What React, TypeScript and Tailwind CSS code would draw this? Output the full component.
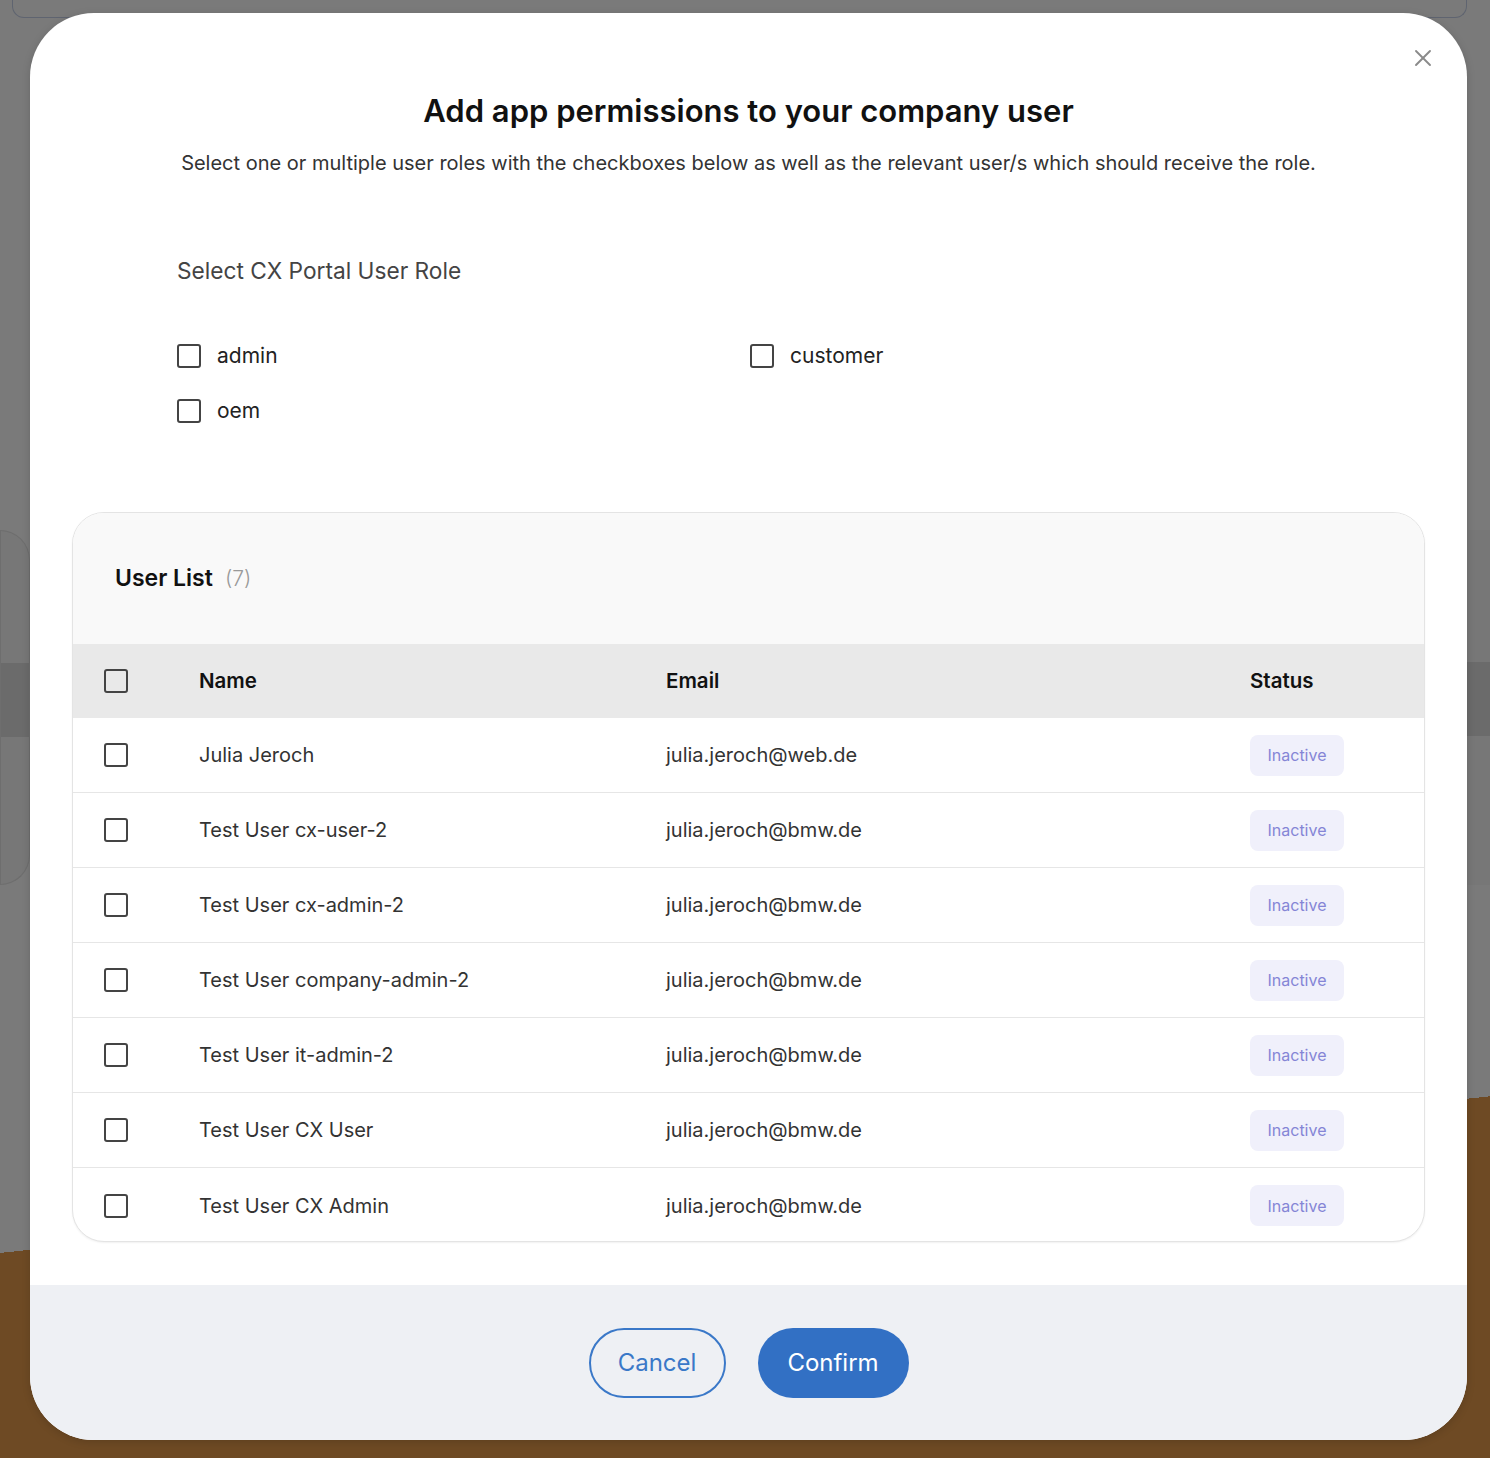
import { X } from 'lucide-react';

const roles = ['admin', 'customer', 'oem'];

const users = [
  { name: 'Julia Jeroch', email: 'julia.jeroch@web.de' },
  { name: 'Test User cx-user-2', email: 'julia.jeroch@bmw.de' },
  { name: 'Test User cx-admin-2', email: 'julia.jeroch@bmw.de' },
  { name: 'Test User company-admin-2', email: 'julia.jeroch@bmw.de' },
  { name: 'Test User it-admin-2', email: 'julia.jeroch@bmw.de' },
  { name: 'Test User CX User', email: 'julia.jeroch@bmw.de' },
  { name: 'Test User CX Admin', email: 'julia.jeroch@bmw.de' },
];

function Box() {
  return <span className="block w-6 h-6 rounded-[3px] border-2 border-[#444]" />;
}

export default function App() {
  return (
    <div
      className="relative w-full h-[1458px] overflow-hidden bg-[linear-gradient(174deg,#7a7a7a_77.6%,#6e4a24_77.6%)]"
      style={{ fontFamily: 'Inter, "Noto Sans", sans-serif' }}
    >
      {/* page behind the overlay */}
      <div className="ml-[12px] mr-[23px] h-[18px] rounded-b-[12px] border border-t-0 border-[#5f6470]" />
      <div className="mt-[512px] flex justify-between">
        <div className="w-[30px] h-[355px] rounded-tr-[40px] rounded-br-[40px] border border-[#6e6e6e] bg-[#777]">
          <div className="mt-[132px] h-[74px] bg-[#6b6b6b]" />
        </div>
        <div className="w-[24px] h-[355px] bg-[#777]">
          <div className="mt-[132px] h-[74px] bg-[#6b6b6b]" />
        </div>
      </div>

      {/* modal */}
      <div className="absolute left-[30px] top-[13px] w-[1437px] h-[1427px] bg-white rounded-[64px] overflow-hidden flex flex-col shadow-[0_2px_8px_rgba(0,0,0,0.15)]">
        <button className="absolute right-[30px] top-[31px] text-[#8a8a8a]">
          <X size={28} strokeWidth={1.6} />
        </button>

        <h1 className="mt-[78px] text-center text-[31px] leading-[40px] font-semibold text-[#111]">
          Add app permissions to your company user
        </h1>
        <p className="mt-[18px] text-center text-[20px] leading-[28px] text-[#333]">
          Select one or multiple user roles with the checkboxes below as well as the relevant user/s which should receive the role.
        </p>

        <div className="pl-[147px]">
          <div className="mt-[79px] text-[22.7px] leading-[30px] text-[#444]">Select CX Portal User Role</div>
          <div className="mt-[42px] grid grid-cols-[573px_1fr]">
            {roles.map((r) => (
              <label key={r} className="h-[55px] flex items-center gap-4 text-[21px] text-[#222]">
                <Box />
                {r}
              </label>
            ))}
          </div>
        </div>

        <div className="mt-[74px] mx-[42px] h-[730px] rounded-[32px] border border-[#e4e4e4] bg-white overflow-hidden shadow-[0_1px_2px_rgba(0,0,0,0.06)]">
          <div className="h-[131px] bg-[#f9f9f9] flex items-center pl-[42px] gap-3">
            <span className="text-[23px] font-semibold text-[#111]">User List</span>
            <span className="text-[21px] font-light text-[#999]">(7)</span>
          </div>
          <div className="h-[74px] bg-[#e9e9e9] grid grid-cols-[126px_467px_584px_1fr] items-center text-[20.5px] font-semibold text-[#111]">
            <div className="pl-[31px]"><Box /></div>
            <div>Name</div>
            <div>Email</div>
            <div>Status</div>
          </div>
          {users.map((u, i) => (
            <div
              key={i}
              className={`h-[75px] grid grid-cols-[126px_467px_584px_1fr] items-center text-[20px] text-[#333] ${i < users.length - 1 ? 'border-b border-[#e6e6e6]' : ''}`}
            >
              <div className="pl-[31px]"><Box /></div>
              <div>{u.name}</div>
              <div>{u.email}</div>
              <div>
                <span className="inline-flex items-center justify-center w-[94px] h-[41px] rounded-[8px] bg-[#f0f0fb] text-[16px] text-[#8585d6]">
                  Inactive
                </span>
              </div>
            </div>
          ))}
        </div>

        <div className="mt-auto h-[155px] bg-[#eef0f4] flex items-center justify-center gap-8">
          <button className="w-[137px] h-[70px] rounded-full border-2 border-[#3a78c8] text-[#3a78c8] text-[24px]">
            Cancel
          </button>
          <button className="w-[151px] h-[70px] rounded-full bg-[#3270c4] text-white text-[24px]">
            Confirm
          </button>
        </div>
      </div>
    </div>
  );
}
